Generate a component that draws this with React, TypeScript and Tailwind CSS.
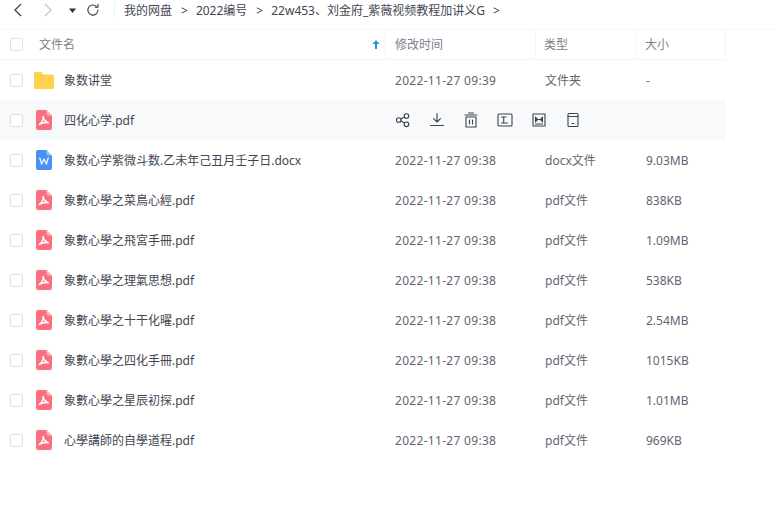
import React from "react";

const FONT = "font-['Noto_Sans','Noto_Sans_CJK_SC',sans-serif]";

type Row = { name: string; time: string; type: string; size: string; kind: "folder" | "pdf" | "word"; hover?: boolean };

const rows: Row[] = [
  { name: "象数讲堂", time: "2022-11-27 09:39", type: "文件夹", size: "-", kind: "folder" },
  { name: "四化心学.pdf", time: "", type: "", size: "", kind: "pdf", hover: true },
  { name: "象数心学紫微斗数.乙未年己丑月壬子日.docx", time: "2022-11-27 09:38", type: "docx文件", size: "9.03MB", kind: "word" },
  { name: "象數心學之菜鳥心經.pdf", time: "2022-11-27 09:38", type: "pdf文件", size: "838KB", kind: "pdf" },
  { name: "象數心學之飛宮手冊.pdf", time: "2022-11-27 09:38", type: "pdf文件", size: "1.09MB", kind: "pdf" },
  { name: "象數心學之理氣思想.pdf", time: "2022-11-27 09:38", type: "pdf文件", size: "538KB", kind: "pdf" },
  { name: "象數心學之十干化曜.pdf", time: "2022-11-27 09:38", type: "pdf文件", size: "2.54MB", kind: "pdf" },
  { name: "象數心學之四化手冊.pdf", time: "2022-11-27 09:38", type: "pdf文件", size: "1015KB", kind: "pdf" },
  { name: "象數心學之星辰初探.pdf", time: "2022-11-27 09:38", type: "pdf文件", size: "1.01MB", kind: "pdf" },
  { name: "心學講師的自學道程.pdf", time: "2022-11-27 09:38", type: "pdf文件", size: "969KB", kind: "pdf" },
];

function FileIcon({ kind }: { kind: Row["kind"] }) {
  if (kind === "folder") {
    return (
      <svg width="20" height="17" viewBox="0 0 20 17">
        <path d="M0 1.500A1.500 1.500 0 0 1 1.500 0h5.700l2.300 2.500h9A1.500 1.500 0 0 1 20 4v11.500a1.500 1.500 0 0 1-1.500 1.500h-17A1.500 1.500 0 0 1 0 15.500z" fill="#ffd24d" />
        <path d="M0 4.500h8.500l1-2h-2.300L5.500 4H0z" fill="#fcc62f" />
      </svg>
    );
  }
  const color = kind === "pdf" ? "#fb6f80" : "#4a90f2";
  return (
    <svg width="16" height="20" viewBox="0 0 16 20">
      <path d="M2 0h8.500L16 5.500V18a2 2 0 0 1-2 2H2a2 2 0 0 1-2-2V2a2 2 0 0 1 2-2z" fill={color} />
      <path d="M10.500 0L16 5.500h-3.500a2 2 0 0 1-2-2z" fill="#ffffff" fillOpacity="0.45" />
      {kind === "pdf" ? (
        <path d="M7 6.500c.6 2.800 2 5 5 6.200M7.500 7.500c-.4 2.500-1.600 5-4 7M3.500 14.500c2.500-1.800 5-2.300 9-1.800" fill="none" stroke="#fff" strokeWidth="1.500" strokeLinecap="round" />
      ) : (
        <path d="M3.800 8l1.800 6 2.400-5 2.400 5 1.800-6" fill="none" stroke="#fff" strokeOpacity="0.85" strokeWidth="1.400" strokeLinejoin="round" strokeLinecap="round" />
      )}
    </svg>
  );
}

function Check() {
  return <div className="w-[13px] h-[13px] rounded-[2px] border border-[#dfe1e5] bg-white" />;
}

function Stroke({ children }: { children: React.ReactNode }) {
  return (
    <svg width="16" height="16" viewBox="0 0 16 16" fill="none" stroke="#3b4250" strokeWidth="1.100" strokeLinecap="round" strokeLinejoin="round">
      {children}
    </svg>
  );
}

function Actions() {
  return (
    <div className="flex items-center gap-[18px] pl-[9px]">
      <Stroke>
        <circle cx="3.800" cy="8" r="2.300" />
        <circle cx="11.500" cy="4" r="2.300" />
        <circle cx="11.500" cy="12.300" r="2.300" />
        <path d="M5.800 6.900l3.700-1.900M5.800 9.100l3.700 2" />
      </Stroke>
      <Stroke>
        <path d="M8 1.500v8.500M4.500 6.700L8 10l3.500-3.300M1.500 13.500h13" />
      </Stroke>
      <Stroke>
        <path d="M2 3h12M5.500 1h5M3 5h10v10H3zM6.500 8v4M9.500 8v4" />
      </Stroke>
      <Stroke>
        <rect x="1" y="2" width="14" height="12" rx="1" />
        <path d="M4.500 5h4.500M6.700 5v6M4.500 11h6" />
      </Stroke>
      <Stroke>
        <rect x="2" y="2" width="12" height="12" />
        <path d="M4.500 5v5M11.500 5v5M4.500 7.500h7M6 6l-1.500 1.500L6 9M10 6l1.500 1.500L10 9M4.500 12h7" />
      </Stroke>
      <Stroke>
        <rect x="3" y="1.500" width="10" height="13" rx="1" />
        <path d="M3 4.500h10M7 11.500h2" />
      </Stroke>
    </div>
  );
}

export default function App() {
  return (
    <div className={`w-[776px] h-[507px] bg-white overflow-hidden text-[12px] text-[#454d5a] ${FONT}`}>
      {/* toolbar */}
      <div className="h-[29px] flex items-center pb-[9px]">
        <svg width="12" height="14" viewBox="0 0 12 14" className="ml-[12px]" fill="none" stroke="#3b4250" strokeWidth="1.300">
          <path d="M9 1L3 7l6 6" />
        </svg>
        <svg width="12" height="14" viewBox="0 0 12 14" className="ml-[18px]" fill="none" stroke="#c4c7cc" strokeWidth="1.300">
          <path d="M3 1l6 6-6 6" />
        </svg>
        <svg width="7" height="5" viewBox="0 0 7 5" className="ml-[15px]">
          <path d="M0 .5h7L3.500 5z" fill="#2f343d" />
        </svg>
        <svg width="14" height="14" viewBox="0 0 15 15" className="ml-[10px]" fill="none" stroke="#3b4250" strokeWidth="1.200" strokeLinecap="round">
          <path d="M12.800 7.500a5.400 5.400 0 1 1-1.600-3.800M12.900 1.500v3h-3" />
        </svg>
        <div className="w-px h-[16px] bg-[#eeeff1] ml-[14px]" />
        <div className="flex items-center ml-[9px] pt-[1px] text-[#3f4652] whitespace-nowrap">
          <span>我的网盘</span>
          <span className="ml-[9px]">&gt;</span>
          <span className="ml-[8px]">2022编号</span>
          <span className="ml-[9px]">&gt;</span>
          <span className="ml-[8px]">22w453、刘金府_紫薇视频教程加讲义G</span>
          <span className="ml-[8px]">&gt;</span>
        </div>
      </div>
      {/* header */}
      <div className="h-[31px] flex items-stretch text-[#7b818c] border-t border-[#f7f7f8]">
        <div className="w-[386px] flex items-center border-r border-b border-[#f3f4f5]">
          <div className="ml-[10px]"><Check /></div>
          <span className="ml-[16px] pt-[1px]">文件名</span>
          <svg width="8" height="10" viewBox="0 0 8 10" className="ml-auto mr-[5px]">
            <path d="M4 0l3.500 4H5v5H3V4H.5z" fill="#1f94dc" />
          </svg>
        </div>
        <div className="w-[150px] flex items-center pl-[9px] pt-[1px] border-r border-b border-[#f3f4f5]">修改时间</div>
        <div className="w-[100px] flex items-center pl-[8px] pt-[1px] border-r border-b border-[#f3f4f5]">类型</div>
        <div className="w-[90px] flex items-center pl-[9px] pt-[1px] border-r border-b border-[#f3f4f5]">大小</div>
      </div>
      {/* rows */}
      <div>
        {rows.map((r) => (
          <div key={r.name} className={`w-[726px] h-[40px] flex items-center ${r.hover ? "bg-[#f8f9fb]" : ""}`}>
            <div className="ml-[10px]"><Check /></div>
            <div className="ml-[10px] w-[21px] flex justify-center">
              <FileIcon kind={r.kind} />
            </div>
            <div className="ml-[10px] w-[322px] pt-[1px] text-[#3f4652] whitespace-nowrap">{r.name}</div>
            {r.hover ? (
              <Actions />
            ) : (
              <>
                <div className="w-[150px] pl-[9px] pt-[1px] text-[#5f6672] tracking-[0.3px] whitespace-nowrap">{r.time}</div>
                <div className="w-[100px] pl-[9px] pt-[1px] text-[#5f6672]">{r.type}</div>
                <div className="w-[90px] pl-[10px] pt-[1px] text-[#5f6672]">{r.size}</div>
              </>
            )}
          </div>
        ))}
      </div>
    </div>
  );
}
